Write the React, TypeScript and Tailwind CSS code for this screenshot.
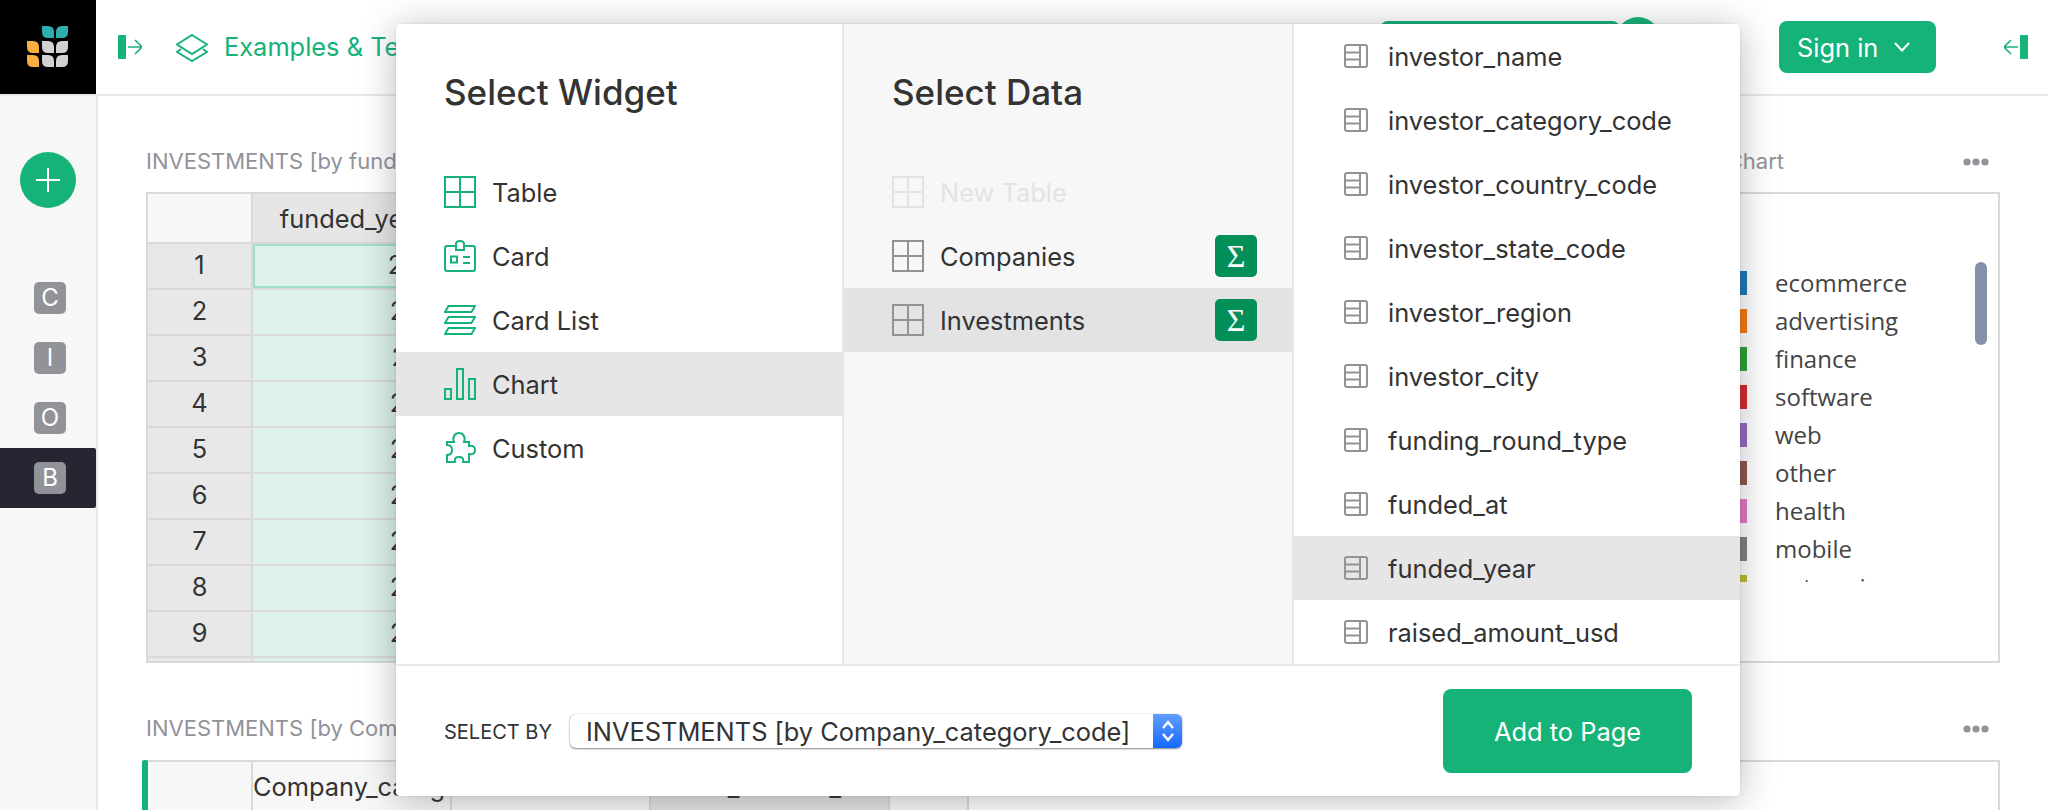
import React from "react";

const green = "#16b378";

function Logo() {
  const leaf = (x: number, y: number, c: string, flip: boolean, key: string) => (
    <path
      key={key}
      fill={c}
      d={
        flip
          ? `M${x + 12} ${y} V${y + 6} Q${x + 12} ${y + 12} ${x + 6} ${y + 12} H${x} V${y + 6} Q${x} ${y} ${x + 6} ${y} Z`
          : `M${x} ${y} H${x + 6} Q${x + 12} ${y} ${x + 12} ${y + 6} V${y + 12} H${x + 6} Q${x} ${y + 12} ${x} ${y + 6} Z`
      }
    />
  );
  return (
    <svg width="96" height="95" viewBox="0 0 96 95">
      {leaf(42, 26, "#2cb0af", false, "a")}
      {leaf(56, 26, "#2cb0af", true, "b")}
      {leaf(27, 41, "#f9ae41", false, "c")}
      {leaf(42, 41, "#d2d2d2", false, "d")}
      {leaf(56, 41, "#d2d2d2", true, "e")}
      {leaf(27, 55, "#f9ae41", false, "f")}
      {leaf(42, 55, "#d2d2d2", false, "g")}
      {leaf(56, 55, "#d2d2d2", true, "h")}
    </svg>
  );
}

function PanelIcon({ right }: { right?: boolean }) {
  return (
    <svg width="24" height="24" viewBox="0 0 24 24" className={right ? "-scale-x-100" : ""}>
      <rect x="0" y="0" width="8" height="24" rx="1" fill={green} />
      <path d="M10 12 H24 M17 5 L24 12 L17 19" fill="none" stroke={green} strokeWidth="1.6" />
    </svg>
  );
}

function LayersIcon() {
  return (
    <svg width="32" height="28" viewBox="0 0 32 28" fill="none" stroke={green} strokeWidth="2">
      <path d="M16 1 L31 10.5 L16 20 L1 10.5 Z" />
      <path d="M5 15 L1 18 L16 27 L31 18 L27 15" />
    </svg>
  );
}

function GridIcon({ color }: { color: string }) {
  return (
    <svg width="32" height="32" viewBox="0 0 32 32" fill="none" stroke={color} strokeWidth="2" className="shrink-0">
      <path d="M1 1 H31 V31 H1 Z M16 1 V31 M1 16 H31" />
    </svg>
  );
}

function CardIcon() {
  return (
    <svg width="32" height="32" viewBox="0 0 32 32" fill="none" stroke={green} strokeWidth="2" className="shrink-0">
      <path d="M12 6 H3 Q1 6 1 8 V29 Q1 31 3 31 H29 Q31 31 31 29 V8 Q31 6 29 6 H20" />
      <path d="M12 10 V4 Q12 1 16 1 Q20 1 20 4 V10 Z" />
      <rect x="7" y="16.5" width="6" height="6" />
      <path d="M19 17 H26 M19 23 H26" />
    </svg>
  );
}

function CardListIcon() {
  return (
    <svg width="32" height="32" viewBox="0 0 32 32" fill="none" stroke={green} strokeWidth="2" className="shrink-0">
      <path d="M4.5 2 H31 L27.5 8 H1 Z" />
      <path d="M4.5 13 H31 L27.5 19 H1 Z" />
      <path d="M4.5 24 H31 L27.5 30 H1 Z" />
    </svg>
  );
}

function ChartIcon() {
  return (
    <svg width="32" height="32" viewBox="0 0 32 32" fill="none" stroke={green} strokeWidth="2" className="shrink-0">
      <rect x="1" y="21" width="6" height="10" />
      <rect x="13" y="1" width="6" height="30" />
      <rect x="25" y="11" width="6" height="20" />
    </svg>
  );
}

function PuzzleIcon() {
  return (
    <svg width="32" height="32" viewBox="0 0 32 32" fill="none" stroke={green} strokeWidth="2" className="shrink-0">
      <path d="M3 10 H10 C8 5 11 1 15 1 C19 1 22 5 20 10 H25 V14 C29 13 31 15 31 18 C31 21 29 23 25 22 V30 H19 C20 26 18 25 15 25 C12 25 10 26 11 30 H3 V23 C6 23 8 21 8 18 C8 15 6 13 3 13 Z" />
    </svg>
  );
}

function FieldIcon() {
  return (
    <svg width="24" height="24" viewBox="0 0 24 24" fill="none" stroke="#929299" strokeWidth="2" className="shrink-0">
      <rect x="1" y="1" width="22" height="22" rx="2" />
      <path d="M16 1 V23 M1 8.5 H16 M1 15.5 H16" />
    </svg>
  );
}

function Sigma() {
  return (
    <div className="ml-auto flex h-[42px] w-[42px] items-center justify-center rounded-[5px] bg-[#029058] font-['Liberation_Serif',serif] text-[32px] leading-none text-white">
      Σ
    </div>
  );
}

function SideBadge({ letter, active }: { letter: string; active?: boolean }) {
  return (
    <div className={`flex h-[60px] items-center pl-[34px] ${active ? "rounded-r-[2px] bg-[#262633]" : ""}`}>
      <div className="flex h-[32px] w-[32px] items-center justify-center rounded-[5px] bg-[#929299] text-[24px] text-white">
        {letter}
      </div>
    </div>
  );
}

const years = ["2008", "2009", "2007", "2008", "2009", "2008", "2009", "2008", "2009", "2009"];

function DataTable() {
  return (
    <div className="h-[471px] w-[1134px] overflow-hidden border-2 border-[#d9d9d9]">
      <div className="flex h-[50px] border-b-2 border-[#d9d9d9]">
        <div className="w-[105px] shrink-0 border-r-2 border-[#d9d9d9] bg-[#f7f7f7]" />
        <div className="flex w-[201px] items-center justify-center bg-[#e6e6e6] pt-[2px] text-[#333]">funded_year</div>
      </div>
      {years.map((y, i) => (
        <div key={i} className="flex h-[46px] border-b-2 border-[#d9d9d9]">
          <div className="flex w-[105px] shrink-0 items-center justify-center border-r-2 border-[#d9d9d9] bg-[#e8e8e8] pb-[2px] text-[#333]">
            {i + 1}
          </div>
          <div
            className={`flex w-[205px] items-center justify-end bg-[#dcf2ea] pb-[2px] pr-[5px] text-[#333] ${
              i === 0 ? "border-2 border-[#a0e0c8]" : ""
            }`}
          >
            {y}
          </div>
        </div>
      ))}
    </div>
  );
}

const legend: [string, string][] = [
  ["ecommerce", "#1f77b4"],
  ["advertising", "#f5780c"],
  ["finance", "#2ca02c"],
  ["software", "#d62728"],
  ["web", "#9467bd"],
  ["other", "#8c564b"],
  ["health", "#e377c2"],
  ["mobile", "#7f7f7f"],
  ["enterprise", "#bcbd22"],
];

function ChartWidget() {
  return (
    <div className="relative h-[471px] w-[704px] border-2 border-[#d9d9d9]">
      <div className="ml-[422px] mt-[70px] h-[318px] w-[240px] overflow-hidden font-['Open_Sans',sans-serif] text-[24px] text-[#444]">
        {legend.map(([name, c]) => (
          <div key={name} className="flex h-[38px] items-center">
            <div className="h-[24px] w-[27px] shrink-0" style={{ background: c }} />
            <div className="ml-[28px] leading-[24px]">{name}</div>
          </div>
        ))}
      </div>
      <div className="absolute left-[677px] top-[68px] h-[83px] w-[12px] rounded-[6px] bg-[#8490a8]" />
    </div>
  );
}

function WidgetRow({ icon, label, active, muted, sigma }: { icon: React.ReactNode; label: string; active?: string; muted?: boolean; sigma?: boolean }) {
  return (
    <div className={`flex h-[64px] items-center pl-[48px] pr-[35px] ${active ?? ""}`}>
      {icon}
      <span className={`ml-[16px] pt-[2px] ${muted ? "text-[#e3e3e3]" : "text-[#333]"}`}>{label}</span>
      {sigma && <Sigma />}
    </div>
  );
}

const fields = [
  "investor_name",
  "investor_category_code",
  "investor_country_code",
  "investor_state_code",
  "investor_region",
  "investor_city",
  "funding_round_type",
  "funded_at",
  "funded_year",
  "raised_amount_usd",
];

function Modal() {
  return (
    <div className="absolute left-[396px] top-[24px] z-10 flex h-[772px] w-[1344px] flex-col overflow-hidden rounded-[4px] bg-white shadow-[0_4px_36px_0_rgba(31,37,50,0.31),0_0_2px_0_rgba(76,86,103,0.24)]">
      <div className="flex h-[640px] text-[#333]">
        <div className="w-[446px] shrink-0">
          <div className="flex h-[136px] items-start pl-[48px] pt-[44px] text-[35px] font-medium leading-[48px]">Select Widget</div>
          <WidgetRow icon={<GridIcon color={green} />} label="Table" />
          <WidgetRow icon={<CardIcon />} label="Card" />
          <WidgetRow icon={<CardListIcon />} label="Card List" />
          <WidgetRow icon={<ChartIcon />} label="Chart" active="bg-[#e6e6e6]" />
          <WidgetRow icon={<PuzzleIcon />} label="Custom" />
        </div>
        <div className="w-[452px] shrink-0 border-x-2 border-[#e8e8e8] bg-[#f7f7f7]">
          <div className="flex h-[136px] items-start pl-[48px] pt-[44px] text-[35px] font-medium leading-[48px]">Select Data</div>
          <WidgetRow icon={<GridIcon color="#e3e3e3" />} label="New Table" muted />
          <WidgetRow icon={<GridIcon color="#929299" />} label="Companies" sigma />
          <WidgetRow icon={<GridIcon color="#929299" />} label="Investments" sigma active="bg-[#e3e3e3]" />
        </div>
        <div className="flex-1 overflow-hidden">
          {fields.map((f) => (
            <div key={f} className={`flex h-[64px] items-center pl-[50px] ${f === "funded_year" ? "bg-[#e6e6e6]" : ""}`}>
              <FieldIcon />
              <span className="ml-[20px] pt-[2px]">{f}</span>
            </div>
          ))}
        </div>
      </div>
      <div className="flex flex-1 items-center border-t-2 border-[#e8e8e8] pl-[48px] pr-[48px]">
        <span className="w-[108px] whitespace-nowrap pt-[2px] text-[20px] uppercase text-[#333]">Select by</span>
        <div className="ml-[18px] flex h-[34px] w-[612px] items-center overflow-hidden rounded-[6px] bg-white shadow-[0_1px_2px_rgba(0,0,0,0.45),0_0_1px_rgba(0,0,0,0.4)]">
          <span className="flex-1 pl-[16px] pt-[2px] leading-[34px] text-[#333]">INVESTMENTS [by Company_category_code]</span>
          <div className="flex h-[34px] w-[29px] items-center justify-center bg-gradient-to-b from-[#5f9dff] to-[#0f67ff]">
            <svg width="14" height="24" viewBox="0 0 14 24" fill="none" stroke="#fff" strokeWidth="2.4">
              <path d="M2 9 L7 3 L12 9 M2 15 L7 21 L12 15" />
            </svg>
          </div>
        </div>
        <div className="ml-auto flex h-[84px] w-[249px] items-center justify-center rounded-[8px] bg-[#16b378] pt-[2px] text-white">
          Add to Page
        </div>
      </div>
    </div>
  );
}

export default function App() {
  return (
    <div className="relative h-[810px] w-[2048px] overflow-hidden bg-white font-['Inter',sans-serif] text-[25.4px]">
      <div className="flex h-[96px] border-b-2 border-[#e8e8e8]">
        <div className="h-[94px] w-[96px] overflow-hidden bg-black">
          <Logo />
        </div>
        <div className="flex flex-1 items-center pl-[22px]">
          <PanelIcon />
          <div className="ml-[34px] mt-[2px]">
            <LayersIcon />
          </div>
          <span className="ml-[16px] w-[1156px] text-[#16b378]">Examples &amp; Templates</span>
          <div className="h-[52px] w-[240px] rounded-[8px] bg-[#16b378]" />
          <div className="-ml-[4px] -mt-[16px] h-[44px] w-[44px] rounded-full bg-[#16b378]" />
          <div className="ml-[119px] flex h-[52px] w-[157px] items-center gap-[14px] rounded-[8px] bg-[#16b378] pl-[18px] text-white">
            <span className="pt-[2px]">Sign in</span>
            <svg width="20" height="12" viewBox="0 0 20 12" fill="none" stroke="#fff" strokeWidth="2">
              <path d="M3 2 L10 9.5 L17 2" />
            </svg>
          </div>
          <div className="ml-[68px]">
            <PanelIcon right />
          </div>
        </div>
      </div>

      <div className="flex h-[714px]">
        <div className="w-[98px] shrink-0 border-r-2 border-[#e8e8e8] bg-[#f7f7f7]">
          <div className="ml-[20px] mt-[56px] flex h-[56px] w-[56px] items-center justify-center rounded-full bg-[#16b378]">
            <svg width="24" height="24" viewBox="0 0 24 24" stroke="#fff" strokeWidth="2">
              <path d="M12 0 V24 M0 12 H24" />
            </svg>
          </div>
          <div className="mt-[60px] w-[96px]">
            <SideBadge letter="C" />
            <SideBadge letter="I" />
            <SideBadge letter="O" />
            <SideBadge letter="B" active />
          </div>
        </div>

        <div className="flex-1 overflow-hidden pl-[48px] pr-[48px] pt-[49px]">
          <div className="flex gap-[16px]">
            <div>
              <div className="flex h-[32px] items-center text-[22px] text-[#929299]">INVESTMENTS [by funded_year]</div>
              <div className="mt-[15px]">
                <DataTable />
              </div>
            </div>
            <div>
              <div className="flex h-[32px] items-center justify-between text-[22px] text-[#929299]">
                <div className="w-[488px] text-right">INVESTMENTS Chart</div>
                <svg width="26" height="8" viewBox="0 0 26 8" className="mr-[11px] mt-[2px]" fill="#929299">
                  <circle cx="4" cy="4" r="3.6" />
                  <circle cx="13" cy="4" r="3.6" />
                  <circle cx="22" cy="4" r="3.6" />
                </svg>
              </div>
              <div className="mt-[15px]">
                <ChartWidget />
              </div>
            </div>
          </div>

          <div className="mt-[49px] flex h-[32px] items-center justify-between text-[22px] text-[#929299]">
            <span>INVESTMENTS [by Company_category_code]</span>
            <svg width="26" height="8" viewBox="0 0 26 8" className="mr-[11px] mt-[2px]" fill="#929299">
              <circle cx="4" cy="4" r="3.6" />
              <circle cx="13" cy="4" r="3.6" />
              <circle cx="22" cy="4" r="3.6" />
            </svg>
          </div>
          <div className="relative mt-[16px] h-[60px] border-y-2 border-r-2 border-[#d9d9d9]">
            <div className="absolute -left-[4px] top-[-2px] h-[60px] w-[6px] rounded-t-[2px] bg-[#16b378]" />
            <div className="flex h-[50px] text-[#333]">
              <div className="w-[107px] shrink-0 border-r-2 border-[#d9d9d9] bg-[#f7f7f7]" />
              <div className="flex w-[199px] items-center overflow-hidden whitespace-nowrap border-r-2 border-[#d9d9d9] bg-[#f7f7f7]">Company_category_code</div>
              <div className="flex w-[199px] items-center justify-center border-r-2 border-[#d9d9d9] bg-[#f7f7f7]">count</div>
              <div className="flex w-[239px] items-center justify-center border-r-2 border-[#d9d9d9] bg-[#e4e4e4]">raised_amount_usd</div>
              <div className="w-[79px] border-r-2 border-[#d9d9d9] bg-[#f7f7f7]" />
            </div>
          </div>
        </div>
      </div>

      <Modal />
    </div>
  );
}
